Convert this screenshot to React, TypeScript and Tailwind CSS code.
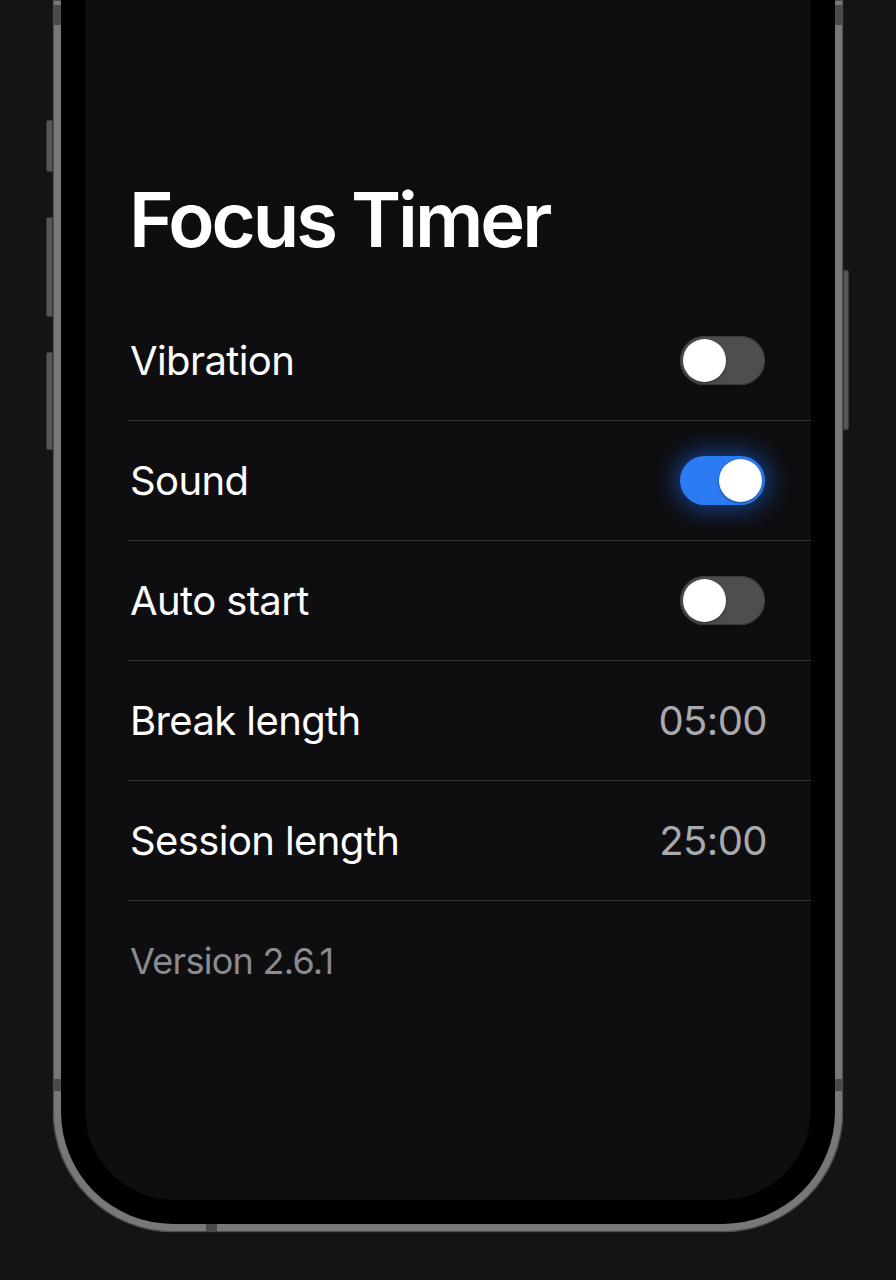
import { useState } from 'react'

type Row =
  | { id: string; label: string; kind: 'toggle'; on: boolean }
  | { id: string; label: string; kind: 'value'; value: string }

const ROWS: Row[] = [
  { id: 'vibration', label: 'Vibration', kind: 'toggle', on: false },
  { id: 'sound', label: 'Sound', kind: 'toggle', on: true },
  { id: 'auto', label: 'Auto start', kind: 'toggle', on: false },
  { id: 'break', label: 'Break length', kind: 'value', value: '05:00' },
  { id: 'session', label: 'Session length', kind: 'value', value: '25:00' },
]

export default function App() {
  const [toggles, setToggles] = useState<Record<string, boolean>>(() =>
    Object.fromEntries(ROWS.filter((r) => r.kind === 'toggle').map((r) => [r.id, (r as { on: boolean }).on]))
  )

  return (
    <div className="relative h-[1280px] w-[896px] overflow-hidden bg-[#141416] pl-[53px] font-['Inter','Noto_Sans',sans-serif]">
      <div className="relative h-[1232px] w-[790px] rounded-b-[120px] bg-[#78787a] px-[8px] pb-[8px] shadow-[0_0_0_1px_#1f1f21,inset_0_0_0_1px_#4c4c4e]">
        <SideButtons />
        <AntennaBands />

        <div className="h-full rounded-b-[112px] bg-black px-[24px] pb-[24px]">
          <div className="h-full rounded-b-[90px] bg-[#0e0e10] pl-[43px] pt-[181px]">
            <h1 className="pl-[1px] text-[76px] leading-none font-semibold tracking-[-0.04em] text-white">
              Focus Timer
            </h1>

            <ul className="mt-[44px]">
              {ROWS.map((row) => (
                <li
                  key={row.id}
                  className="flex h-[120px] items-center justify-between border-b border-[#343437] pl-[2px] pr-[44px]"
                >
                  <span className="text-[40px] leading-none tracking-[-0.015em] text-white">{row.label}</span>
                  {row.kind === 'toggle' ? (
                    <Toggle
                      on={toggles[row.id]}
                      onClick={() => setToggles((t) => ({ ...t, [row.id]: !t[row.id] }))}
                    />
                  ) : (
                    <span className="text-[40px] leading-none tracking-[-0.015em] text-[#a9a9ae]">{row.value}</span>
                  )}
                </li>
              ))}
            </ul>

            <div className="flex h-[120px] items-center pl-[2px] text-[36px] leading-none tracking-[-0.02em] text-[#8b8b90]">
              Version 2.6.1
            </div>
          </div>
        </div>
      </div>
    </div>
  )
}

function Toggle({ on, onClick }: { on: boolean; onClick: () => void }) {
  return (
    <button
      onClick={onClick}
      className={`mr-[2px] flex h-[49px] w-[85px] items-center rounded-full px-[3px] ${
        on
          ? 'justify-end bg-[#2b7cf2] shadow-[0_0_22px_6px_rgba(30,110,255,0.45)]'
          : 'justify-start bg-[#4e4e51] shadow-[inset_0_0_0_1px_#3a3a3c]'
      }`}
    >
      <span className="h-[43px] w-[43px] rounded-full bg-white shadow-[0_1px_3px_rgba(0,0,0,0.4)]" />
    </button>
  )
}

// hardware buttons stick out past the frame edge
function SideButtons() {
  return (
    <>
      <span className="absolute -left-[7px] top-[120px] h-[52px] w-[7px] rounded-l-[2px] border border-[#3a3a3c] bg-[#555557]" />
      <span className="absolute -left-[7px] top-[217px] h-[100px] w-[7px] rounded-l-[2px] border border-[#3a3a3c] bg-[#555557]" />
      <span className="absolute -left-[7px] top-[352px] h-[98px] w-[7px] rounded-l-[2px] border border-[#3a3a3c] bg-[#555557]" />
      <span className="absolute -right-[6px] top-[270px] h-[160px] w-[6px] rounded-r-[2px] border border-[#3a3a3c] bg-[#555557]" />
    </>
  )
}

// darker antenna breaks painted over the metal rim
function AntennaBands() {
  return (
    <>
      <span className="absolute left-0 top-[5px] h-[20px] w-[8px] bg-[#4a4a4c]" />
      <span className="absolute right-0 top-[5px] h-[20px] w-[8px] bg-[#4a4a4c]" />
      <span className="absolute left-0 top-[1079px] h-[12px] w-[8px] bg-[#4a4a4c]" />
      <span className="absolute right-0 top-[1079px] h-[12px] w-[8px] bg-[#4a4a4c]" />
      <span className="absolute bottom-0 left-[153px] h-[8px] w-[11px] bg-[#4a4a4c]" />
    </>
  )
}
